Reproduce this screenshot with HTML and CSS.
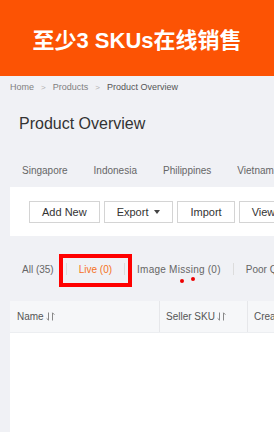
FILE: index.html
```html
<!DOCTYPE html>
<html>
<head>
<meta charset="utf-8">
<link rel="stylesheet" href="styles.css">
</head>
<body>
<div class="banner">至少3 SKUs在线销售</div>
<div class="page">
  <div class="breadcrumb">
    <span class="crumb">Home</span><span class="sep-arrow">&gt;</span><span class="crumb">Products</span><span class="sep-arrow">&gt;</span><span class="crumb current">Product Overview</span>
  </div>
  <h1 class="title">Product Overview</h1>
  <div class="countries">
    <span>Singapore</span><span>Indonesia</span><span>Philippines</span><span>Vietnam</span>
  </div>
  <div class="toolbar">
    <button class="btn">Add New</button>
    <button class="btn">Export <span class="caret"></span></button>
    <button class="btn">Import</button>
    <button class="btn">View</button>
  </div>
  <div class="status">
    <span class="tab">All (35)</span><span class="sep"></span>
    <span class="tab active">Live (0)</span><span class="sep"></span>
    <span class="tab wide">Image Missing (0)</span><span class="sep"></span>
    <span class="tab">Poor Quality (0)</span>
    <div class="highlight"></div>
    <div class="dot dot1"></div>
    <div class="dot dot2"></div>
  </div>
  <div class="table">
    <div class="thead">
      <div class="th th-name">Name <svg class="sort" width="9" height="9" viewBox="0 0 9 9"><path d="M2.5 0.5V8.2M2.5 8.2L0.6 6.3M6.5 8.5V0.8M6.5 0.8L8.4 2.7" fill="none" stroke="#888" stroke-width="1"/></svg></div>
      <div class="th">Seller SKU <svg class="sort" width="9" height="9" viewBox="0 0 9 9"><path d="M2.5 0.5V8.2M2.5 8.2L0.6 6.3M6.5 8.5V0.8M6.5 0.8L8.4 2.7" fill="none" stroke="#888" stroke-width="1"/></svg></div>
      <div class="th">Created</div>
    </div>
    <div class="tbody"></div>
  </div>
</div>
</body>
</html>
```
FILE: styles.css
```css
html, body {
  margin: 0;
  padding: 0;
}
body {
  width: 274px;
  height: 432px;
  overflow: hidden;
  background: #f0f1f5;
  font-family: "Liberation Sans", Arial, sans-serif;
}
.banner {
  height: 76px;
  background: #fc5304;
  color: #fff;
  font-family: "Liberation Sans", "Noto Sans CJK SC", sans-serif;
  font-weight: bold;
  font-size: 22px;
  display: flex;
  align-items: center;
  justify-content: center;
  white-space: nowrap;
}
.page {
  padding-left: 10px;
  width: 600px;
}
.breadcrumb {
  height: 23px;
  line-height: 23px;
  font-size: 9px;
  color: #808080;
  white-space: nowrap;
}
.sep-arrow {
  color: #b0b0b0;
  margin: 0 7px;
  font-size: 8px;
}
.crumb.current {
  color: #555;
}
.title {
  margin: 13px 0 0 9px;
  font-size: 16px;
  line-height: 24px;
  font-weight: normal;
  color: #333;
}
.countries {
  margin-top: 17px;
  height: 34px;
  display: flex;
  align-items: center;
  gap: 26px;
  padding-left: 12px;
  font-size: 10px;
  color: #666;
  white-space: nowrap;
}
.toolbar {
  background: #fff;
  height: 49px;
  box-sizing: border-box;
  padding: 14px 0 0 19px;
  display: flex;
  align-items: flex-start;
  gap: 4px;
}
.btn {
  height: 22px;
  padding: 0 12px;
  border: 1px solid #d4d4d4;
  background: #fff;
  color: #333;
  font-family: "Liberation Sans", Arial, sans-serif;
  font-size: 11px;
  display: flex;
  align-items: center;
  gap: 6px;
  white-space: nowrap;
}
.caret {
  width: 0;
  height: 0;
  border-left: 3px solid transparent;
  border-right: 3px solid transparent;
  border-top: 4px solid #444;
}
.status {
  position: relative;
  margin-top: 16px;
  height: 34px;
  display: flex;
  align-items: center;
  font-size: 10px;
  color: #666;
  white-space: nowrap;
}
.tab {
  padding: 0 12px;
}
.tab.wide {
  letter-spacing: 0.25px;
}
.tab.active {
  color: #f57224;
}
.sep {
  width: 1px;
  height: 12px;
  background: #dcdcdc;
}
.highlight {
  position: absolute;
  left: 49px;
  top: 2px;
  width: 73px;
  height: 33px;
  box-sizing: border-box;
  border: 4px solid #ff0000;
}
.dot {
  position: absolute;
  width: 4px;
  height: 4px;
  border-radius: 50%;
  background: #ee0000;
}
.dot1 {
  left: 170px;
  top: 27px;
}
.dot2 {
  left: 181px;
  top: 25px;
}
.table {
  margin-top: 15px;
  background: #fff;
}
.thead {
  display: grid;
  grid-template-columns: 150px 88px 1fr;
  height: 31px;
  background: #f6f7f9;
  border-bottom: 1px solid #eceef1;
}
.th {
  display: flex;
  align-items: center;
  gap: 1px;
  padding-left: 6px;
  font-size: 10px;
  color: #555;
  border-right: 1px solid #e6e7ea;
  white-space: nowrap;
}
.th-name {
  padding-left: 7px;
}
.sort {
  margin-left: 1px;
}
.tbody {
  height: 120px;
}
```
